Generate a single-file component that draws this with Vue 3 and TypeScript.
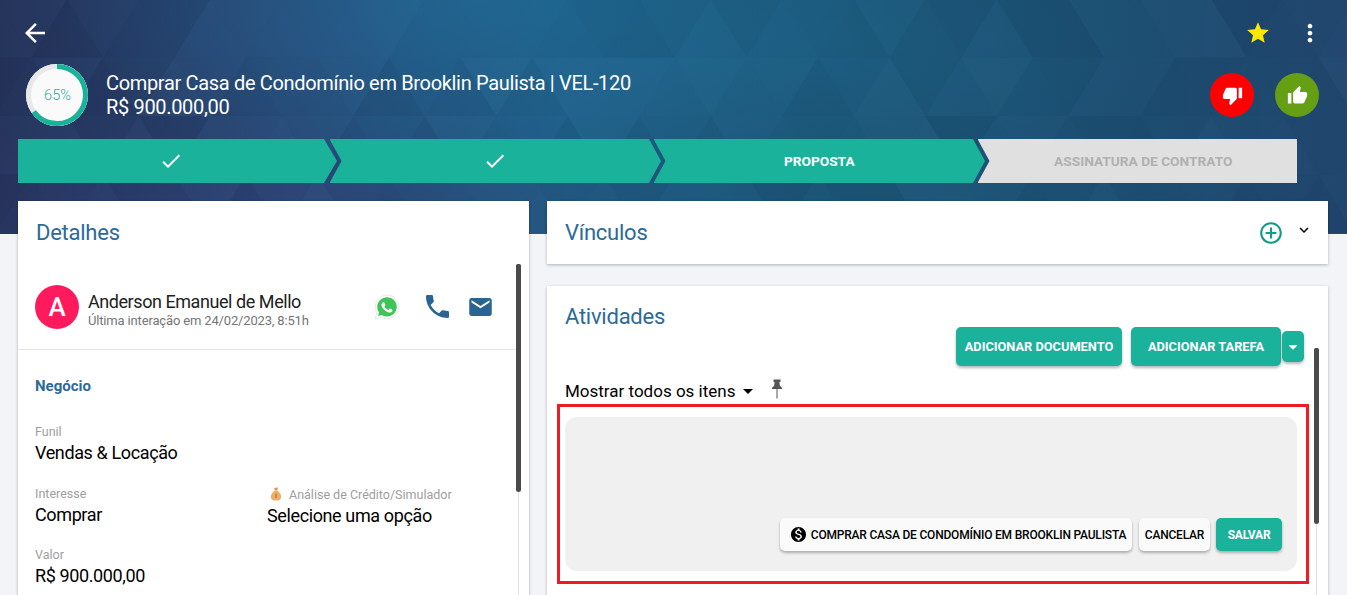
<template>
  <div class="page">
    <header class="hero">
      <svg class="hero-bg" width="1347" height="234" aria-hidden="true">
        <polygon v-for="t in triangles" :key="t.id" :points="t.points" :fill="t.fill" />
      </svg>

      <div class="top-row">
        <svg class="ic-back" viewBox="0 0 24 24"><path d="M20 11H7.83l5.59-5.59L12 4l-8 8 8 8 1.41-1.41L7.83 13H20v-2z" /></svg>
        <div class="top-actions">
          <svg class="ic-star" viewBox="0 0 24 24"><path d="M12 17.27L18.18 21l-1.64-7.03L22 9.24l-7.19-.61L12 2 9.19 8.63 2 9.24l5.46 4.73L5.82 21z" /></svg>
          <svg class="ic-more" viewBox="0 0 24 24"><path d="M12 8c1.1 0 2-.9 2-2s-.9-2-2-2-2 .9-2 2 .9 2 2 2zm0 2c-1.1 0-2 .9-2 2s.9 2 2 2 2-.9 2-2-.9-2-2-2zm0 6c-1.1 0-2 .9-2 2s.9 2 2 2 2-.9 2-2-.9-2-2-2z" /></svg>
        </div>
      </div>

      <div class="info-row">
        <div class="ring">
          <svg width="62" height="62" viewBox="0 0 62 62">
            <circle cx="31" cy="31" r="31" fill="#fafafa" />
            <circle cx="31" cy="31" r="28.5" fill="none" stroke="#e8e8e8" stroke-width="5" />
            <circle
              cx="31"
              cy="31"
              r="28.5"
              fill="none"
              stroke="#1ab29a"
              stroke-width="5"
              :stroke-dasharray="ringDash"
              transform="rotate(-90 31 31)"
            />
          </svg>
          <span class="ring-label">{{ progress }}%</span>
        </div>
        <div class="deal">
          <div class="deal-title">Comprar Casa de Condomínio em Brooklin Paulista | VEL-120</div>
          <div class="deal-price">R$ 900.000,00</div>
        </div>
        <div class="vote">
          <button class="vote-btn down">
            <svg viewBox="0 0 24 24"><path d="M15 3H6c-.83 0-1.54.5-1.84 1.22l-3.02 7.05c-.09.23-.14.47-.14.73v2c0 1.1.9 2 2 2h6.31l-.95 4.57-.03.32c0 .41.17.79.44 1.06L9.83 23l6.59-6.59c.36-.36.58-.86.58-1.41V5c0-1.1-.9-2-2-2zm4 0v12h4V3h-4z" /></svg>
          </button>
          <button class="vote-btn up">
            <svg viewBox="0 0 24 24"><path d="M1 21h4V9H1v12zm22-11c0-1.1-.9-2-2-2h-6.31l.95-4.57.03-.32c0-.41-.17-.79-.44-1.06L14.17 1 7.59 7.59C7.22 7.95 7 8.45 7 9v10c0 1.1.9 2 2 2h9c.83 0 1.54-.5 1.84-1.22l3.02-7.05c.09-.23.14-.47.14-.73v-2z" /></svg>
          </button>
        </div>
      </div>

      <div class="steps">
        <div v-for="(s, i) in steps" :key="i" class="step" :class="[s.state, 'pos-' + i]">
          <svg v-if="s.state === 'done'" class="ic-check" viewBox="0 0 24 24"><path d="M9 16.17L4.83 12l-1.41 1.41L9 19 21 7l-1.41-1.41z" /></svg>
          <span v-else>{{ s.label }}</span>
        </div>
      </div>
    </header>

    <main class="content">
      <section class="card details">
        <h2 class="card-title">Detalhes</h2>
        <div class="contact">
          <div class="avatar">A</div>
          <div class="contact-text">
            <div class="contact-name">Anderson Emanuel de Mello</div>
            <div class="contact-sub">Última interação em 24/02/2023, 8:51h</div>
          </div>
          <svg class="ic-wa" viewBox="0 0 24 24">
            <path d="M12.05 1C6.1 1 1.2 5.9 1.2 11.9c0 1.9.5 3.800 1.500 5.500L1 23l5.800-1.500c1.600.9 3.400 1.300 5.200 1.300 6 0 10.900-4.900 10.900-10.900 0-2.900-1.100-5.600-3.200-7.700C17.700 2.100 15 1 12.050 1z" fill="#fff" stroke="#e0e0e0" stroke-width=".7" />
            <path d="M12 3c-5 0-9 4-9 8.900 0 1.700.5 3.300 1.400 4.700l.2.400-.9 3.300 3.400-.9.400.2c1.400.8 2.900 1.200 4.500 1.200 5 0 9-4 9-9 0-2.400-.9-4.600-2.600-6.300C16.600 3.900 14.400 3 12 3z" fill="#3fc45a" />
            <path fill="#fff" d="M16.700 14.200c-.3-.1-1.500-.7-1.700-.8-.2-.1-.4-.1-.6.100-.2.300-.6.800-.8 1-.1.200-.3.200-.5.100-.3-.1-1.100-.4-2-1.200-.8-.7-1.300-1.500-1.400-1.700-.1-.3 0-.4.100-.5l.4-.4c.1-.2.200-.3.200-.4.100-.2 0-.3 0-.4-.1-.1-.6-1.400-.8-1.900-.2-.5-.4-.4-.6-.4h-.5c-.2 0-.4.100-.7.300-.2.300-.9.900-.9 2.100s.9 2.400 1 2.600c.1.200 1.800 2.700 4.300 3.800.6.300 1.100.4 1.400.5.600.2 1.200.2 1.600.1.500-.1 1.500-.6 1.700-1.200.2-.6.2-1.100.1-1.200-.1-.1-.2-.2-.5-.3z" />
          </svg>
          <svg class="ic-phone" viewBox="3 3 18 18"><path d="M6.620 10.790c1.440 2.830 3.760 5.140 6.590 6.590l2.200-2.200c.27-.27.67-.36 1.020-.24 1.120.37 2.330.57 3.570.57.55 0 1 .45 1 1V20c0 .55-.45 1-1 1-9.390 0-17-7.610-17-17 0-.55.45-1 1-1h3.500c.55 0 1 .45 1 1 0 1.250.2 2.450.57 3.570.11.35.03.74-.25 1.020l-2.200 2.200z" /></svg>
          <svg class="ic-mail" viewBox="2 4 20 16"><path d="M20 4H4c-1.100 0-1.990.9-1.990 2L2 18c0 1.100.9 2 2 2h16c1.100 0 2-.9 2-2V6c0-1.100-.9-2-2-2zm0 4l-8 5-8-5V6l8 5 8-5v2z" /></svg>
        </div>

        <div class="fields">
          <h3 class="section-title">Negócio</h3>
          <div class="field funil">
            <label>Funil</label>
            <div class="value">Vendas &amp; Locação</div>
          </div>
          <div class="field-pair">
            <div class="field">
              <label>Interesse</label>
              <div class="value">Comprar</div>
            </div>
            <div class="field credit">
              <label>
                <svg class="ic-bag" viewBox="0 0 12 14">
                  <path d="M4 .6c.7.5 1.300.5 2 .2.700-.3 1.400-.3 2-.1L7.200 3.200H4.800L4 .6z" fill="#d9994f" />
                  <path d="M4.800 3.600h2.400c2.200 1.600 4 4 4 6.400 0 2.500-2 3.600-5.200 3.600S.8 12.500.8 10c0-2.400 1.800-4.800 4-6.400z" fill="#eeae68" />
                  <rect x="5.500" y="6.600" width="1" height="4.400" fill="#9a6a35" />
                </svg>
                Análise de Crédito/Simulador
              </label>
              <div class="value">Selecione uma opção</div>
            </div>
          </div>
          <div class="field">
            <label>Valor</label>
            <div class="value">R$ 900.000,00</div>
          </div>
        </div>

        <div class="track left-track"></div>
        <div class="thumb left-thumb"></div>
      </section>

      <div class="right-col">
        <section class="card links">
          <h2 class="card-title">Vínculos</h2>
          <svg class="ic-add" viewBox="0 0 24 24"><path d="M13 7h-2v4H7v2h4v4h2v-4h4v-2h-4V7zm-1-5C6.480 2 2 6.480 2 12s4.480 10 10 10 10-4.480 10-10S17.520 2 12 2zm0 18c-4.410 0-8-3.590-8-8s3.590-8 8-8 8 3.590 8 8-3.590 8-8 8z" /></svg>
          <svg class="ic-expand" viewBox="0 0 24 24"><path d="M16.590 8.590L12 13.170 7.410 8.590 6 10l6 6 6-6z" /></svg>
        </section>

        <section class="card activities">
          <h2 class="card-title">Atividades</h2>
          <div class="activity-actions">
            <button class="btn primary tall doc">Adicionar documento</button>
            <button class="btn primary tall task">Adicionar tarefa</button>
            <button class="btn primary caret">
              <svg viewBox="0 0 24 24"><path d="M7 10l5 5 5-5z" /></svg>
            </button>
          </div>
          <div class="filter-row">
            <span>Mostrar todos os itens</span>
            <svg class="ic-drop" viewBox="0 0 24 24"><path d="M7 10l5 5 5-5z" /></svg>
            <svg class="ic-pin" viewBox="0 0 12 20">
              <path d="M2.500.5h7v2.400H8.400l.5 4c1.400.7 2.300 1.800 2.300 3.100H6.500V19.500h-1V10H.8c0-1.300.9-2.400 2.300-3.100l.5-4H2.500V.5z" />
            </svg>
          </div>
          <div class="highlight">
            <div class="composer">
              <button class="btn light link-btn">
                <svg class="ic-money" viewBox="2 2 20 20"><path d="M12 2C6.480 2 2 6.480 2 12s4.480 10 10 10 10-4.480 10-10S17.520 2 12 2zm1.410 16.090V20h-2.670v-1.930c-1.710-.36-3.160-1.460-3.270-3.400h1.960c.1 1.050.82 1.870 2.650 1.870 1.960 0 2.400-.98 2.400-1.590 0-.83-.44-1.610-2.670-2.140-2.480-.6-4.180-1.620-4.180-3.670 0-1.720 1.390-2.840 3.110-3.210V4h2.670v1.950c1.860.45 2.790 1.860 2.850 3.390H14.300c-.05-1.110-.64-1.870-2.220-1.870-1.500 0-2.400.68-2.400 1.640 0 .84.65 1.390 2.670 1.910s4.180 1.390 4.180 3.910c-.01 1.830-1.380 2.830-3.120 3.160z" /></svg>
                Comprar Casa de Condomínio em Brooklin Paulista
              </button>
              <button class="btn light cancel">Cancelar</button>
              <button class="btn primary save">Salvar</button>
            </div>
          </div>
          <div class="track right-track"></div>
          <div class="thumb right-thumb"></div>
        </section>
      </div>
    </main>
  </div>
</template>

<script setup lang="ts">
  import { computed } from 'vue'

  interface Step {
    label: string
    state: 'done' | 'current' | 'todo'
  }

  const progress = 65

  const steps: Step[] = [
    { label: 'Prospecção', state: 'done' },
    { label: 'Visita', state: 'done' },
    { label: 'Proposta', state: 'current' },
    { label: 'Assinatura de contrato', state: 'todo' },
  ]

  const ringDash = computed(() => {
    const len = 2 * Math.PI * 28.5
    return `${len * progress / 100} ${len}`
  })

  // Triangular lattice of the header, apexes worked out from the screenshot
  const CELL_W = 71.5
  const CELL_H = 58.5

  function noise (a: number, b: number) {
    const v = Math.sin(a * 127.1 + b * 311.7) * 43758.5453
    return v - Math.floor(v)
  }

  const triangles = computed(() => {
    const list: { id: string, points: string, fill: string }[] = []
    for (let row = 0; row < 5; row++) {
      const y0 = row * CELL_H - 1
      const y1 = y0 + CELL_H
      const offset = row % 2 === 0 ? 67.25 : 31.5
      for (let col = -2; col < 22; col++) {
        const x = offset + col * CELL_W
        const n1 = noise(col, row)
        const n2 = noise(col + 40, row + 7)
        const down = `${x},${y0} ${x + CELL_W},${y0} ${x + CELL_W / 2},${y1}`
        const up = `${x + CELL_W / 2},${y1} ${x + CELL_W},${y0} ${x + CELL_W * 1.5},${y1}`
        list.push({ id: `d${row}-${col}`, points: down, fill: shade(n1) })
        list.push({ id: `u${row}-${col}`, points: up, fill: shade(n2) })
      }
    }
    return list
  })

  function shade (n: number) {
    if (n < 0.5) return `rgba(0,0,20,${(0.05 * n * 2).toFixed(3)})`
    return `rgba(120,190,240,${(0.04 * (n - 0.5) * 2).toFixed(3)})`
  }
</script>

<style>
  html, body { margin: 0; background: #f2f4f8; }
</style>

<style scoped>
  .page {
    width: 1347px;
    height: 595px;
    overflow: hidden;
    background: #f2f4f8;
    font-family: Roboto, "Liberation Sans", sans-serif;
    color: #000;
  }

  svg { display: block; }

  .hero {
    position: relative;
    height: 234px;
    box-sizing: border-box;
    padding: 14px 0 0 18px;
    background:
      radial-gradient(ellipse 500px 120px at 250px 234px, rgba(60, 65, 130, .35), transparent),
      radial-gradient(ellipse 420px 200px at 470px 0, rgba(30, 120, 165, .45), transparent),
      radial-gradient(ellipse 300px 140px at 850px 40px, rgba(30, 110, 150, .25), transparent),
      linear-gradient(90deg, #25335a 0%, #284673 22%, #205c84 42%, #1c5677 62%, #1c4d70 85%, #22466e 100%);
  }
  .hero-bg { position: absolute; left: 0; top: 0; }

  .top-row, .info-row, .steps { position: relative; }

  .top-row {
    display: flex;
    align-items: center;
    justify-content: space-between;
    height: 38px;
    margin-bottom: 12px;
    padding: 0 23px 0 2px;
  }
  .ic-back { width: 30px; height: 30px; fill: #fff; }
  .top-actions { display: flex; align-items: center; gap: 25px; }
  .ic-star { width: 26px; height: 26px; fill: #ffe800; }
  .ic-more { width: 28px; height: 28px; fill: #fff; }

  .info-row {
    display: flex;
    align-items: center;
    height: 62px;
    margin-bottom: 13px;
    padding: 0 28px 0 8px;
  }
  .ring { position: relative; width: 62px; height: 62px; flex: none; }
  .ring-label {
    position: absolute;
    inset: 0;
    display: flex;
    align-items: center;
    justify-content: center;
    padding-left: 1px;
    font-size: 14.5px;
    font-weight: 300;
    color: #1ab29a;
  }
  .deal { margin-left: 18px; color: #fff; font-size: 20px; line-height: 23px; letter-spacing: -.33px; }
  .deal-price { margin-top: 1px; }
  .vote { display: flex; gap: 21px; margin-left: auto; }
  .vote-btn {
    display: flex;
    align-items: center;
    justify-content: center;
    width: 44px;
    height: 44px;
    padding: 0;
    border: 0;
    border-radius: 50%;
  }
  .vote-btn svg { width: 21px; height: 21px; fill: #fff; }
  .vote-btn.down { background: #ff0000; }
  .vote-btn.up { background: #659f13; }

  .steps { display: flex; height: 44px; width: 1279px; }
  .step {
    display: flex;
    align-items: center;
    justify-content: center;
    height: 44px;
    box-sizing: border-box;
    font-size: 13.7px;
    font-weight: 700;
    text-transform: uppercase;
    color: #fff;
    background: #1ab29a;
  }
  .step.todo { background: #e0e0e0; color: #b0b0b0; }
  .ic-check { width: 24px; height: 24px; fill: #fff; }
  .pos-0 {
    width: 319px;
    padding-right: 13px;
    clip-path: polygon(0 0, 306px 0, 100% 50%, 306px 100%, 0 100%);
  }
  .pos-1, .pos-2 {
    width: 331.5px;
    margin-left: -7.500px;
    clip-path: polygon(0 0, 319.500px 0, 100% 50%, 319.500px 100%, 0 100%, 12px 50%);
  }
  .pos-3 {
    width: 319.500px;
    margin-left: -7.500px;
    padding-left: 12px;
    clip-path: polygon(0 0, 100% 0, 100% 100%, 0 100%, 12px 50%);
  }

  .content {
    position: relative;
    display: grid;
    grid-template-columns: 511px 781px;
    gap: 18px;
    margin-top: -33px;
    padding-left: 18px;
    align-items: start;
  }

  .card {
    position: relative;
    background: #fff;
    box-shadow: 0 1px 3px rgba(0, 0, 0, .28);
  }
  .card-title {
    margin: 0;
    font-size: 22px;
    font-weight: 400;
    line-height: 26px;
    letter-spacing: -.25px;
    color: #2b6a99;
  }

  .details { height: 420px; }
  .details > .card-title { padding: 19px 0 0 18px; }

  .contact {
    display: flex;
    align-items: center;
    height: 104px;
    box-sizing: border-box;
    margin-right: 13px;
    padding: 18px 0 0 17px;
    border-bottom: 1px solid #e4e4e4;
  }
  .avatar {
    display: flex;
    flex: none;
    align-items: center;
    justify-content: center;
    width: 44px;
    height: 44px;
    border-radius: 50%;
    background: #ff1a5e;
    color: #fff;
    font-size: 26px;
    font-weight: 500;
  }
  .contact-text { width: 289px; margin: 5px 0 0 9px; }
  .contact-name { font-size: 18px; line-height: 22px; letter-spacing: -.44px; color: #212121; }
  .contact-sub { font-size: 13px; line-height: 15px; letter-spacing: -.16px; color: #757575; }
  .ic-wa { width: 26px; height: 26px; margin-left: -3px; }
  .ic-phone { width: 23px; height: 23px; margin-left: 25.5px; fill: #2a6493; }
  .ic-mail { width: 23px; height: 18px; margin-left: 20.5px; fill: #2a6493; }

  .fields { padding: 27px 0 0 17px; }
  .section-title {
    margin: 0 0 28px 0;
    font-size: 15px;
    line-height: 18px;
    font-weight: 700;
    color: #2b6a99;
  }
  .field label {
    display: flex;
    align-items: center;
    gap: 7px;
    height: 16px;
    font-size: 12.500px;
    color: #9e9e9e;
  }
  .field .value { margin-top: 2px; font-size: 18px; line-height: 24px; letter-spacing: -.38px; }
  .funil { margin-bottom: 20px; }
  .field-pair {
    display: grid;
    grid-template-columns: 232px 1fr;
    margin-bottom: 18px;
  }
  .credit label { padding-left: 3px; margin-top: 1px; }
  .ic-bag { width: 12px; height: 14px; }

  .thumb {
    position: absolute;
    width: 5px;
    border-radius: 2px 2px 3px 3px;
    background: #4a4a4a;
  }
  .track { position: absolute; width: 1px; background: #dcdfe4; }
  .left-thumb { left: 498px; top: 63px; height: 228px; }
  .left-track { left: 500px; top: 291px; bottom: 0; }

  .links {
    display: flex;
    align-items: center;
    height: 63px;
    padding-left: 18px;
    margin-bottom: 22px;
  }
  .ic-add { width: 26px; height: 26px; margin-left: 610px; fill: #0f9d86; }
  .ic-expand { width: 18px; height: 18px; margin-left: 11px; margin-top: -5px; fill: #000; }

  .activities { height: 320px; padding: 18px 19px 0 10px; box-sizing: border-box; }
  .activities > .card-title { margin-left: 8px; }

  .btn {
    border: 0;
    border-radius: 5px;
    padding: 0;
    font-family: inherit;
    font-size: 12px;
    font-weight: 500;
    letter-spacing: -.2px;
    text-transform: uppercase;
    box-shadow: 0 2px 3px rgba(0, 0, 0, .28);
  }
  .btn.primary { background: #1ab29a; color: #fff; }
  .btn.light { background: #fafafa; color: #000; }

  .activity-actions {
    display: flex;
    align-items: center;
    justify-content: flex-end;
    margin: -3px 5px 13px 0;
  }
  .tall { height: 39px; font-size: 12.8px; font-weight: 700; letter-spacing: 0; }
  .doc { width: 166px; }
  .task { width: 150px; margin-left: 9px; }
  .caret {
    display: flex;
    align-items: center;
    justify-content: center;
    width: 22px;
    height: 31px;
    margin-left: 1px;
  }
  .caret svg { width: 22px; height: 22px; flex: none; fill: #fff; }

  .filter-row {
    display: flex;
    align-items: center;
    height: 24px;
    margin: 0 0 1px 8px;
    font-size: 17px;
  }
  .ic-drop { width: 24px; height: 24px; margin-left: 1px; fill: #000; }
  .ic-pin { width: 12px; height: 20px; margin: -5px 0 0 11px; fill: #555; }

  .highlight {
    box-sizing: border-box;
    height: 180px;
    padding: 10px 9px 10px 5px;
    border: 3px solid #ed1c24;
  }
  .composer {
    display: flex;
    align-items: flex-end;
    justify-content: flex-end;
    gap: 7px;
    box-sizing: border-box;
    height: 154px;
    padding: 0 15px 20px 0;
    border-radius: 12px;
    background: #f0f0f0;
  }
  .composer .btn { height: 33px; }
  .link-btn {
    display: flex;
    align-items: center;
    justify-content: center;
    gap: 5px;
    width: 352px;
    padding-left: 5px;
    box-sizing: border-box;
  }
  .ic-money { width: 15px; height: 15px; flex: none; fill: #000; }
  .cancel { width: 71px; }
  .save { width: 66px; margin-left: -1px; font-weight: 700; }

  .right-thumb { left: 767px; top: 62px; height: 176px; }
  .right-track { left: 769px; top: 238px; bottom: 0; }
</style>
